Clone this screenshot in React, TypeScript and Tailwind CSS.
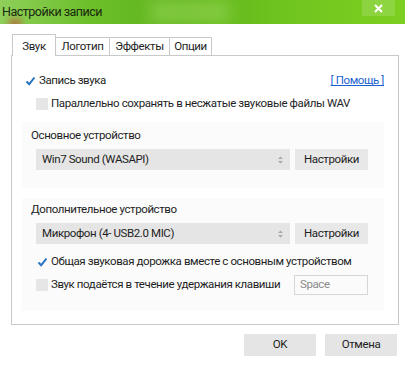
import React from "react";

const Check = () => (
  <svg width="11" height="10" viewBox="0 0 11 10" className="shrink-0">
    <path d="M1.5 5.5 L4.2 8.2 L9.5 1.5" fill="none" stroke="#2a73c2" strokeWidth="2" />
  </svg>
);

const Box = () => <span className="block w-[12px] h-[12px] bg-[#e6e6e6] shrink-0" />;

const Select = ({ value }: { value: string }) => (
  <div className="flex items-center gap-[5px]">
    <div className="w-[254px] h-[21px] bg-[#e5e5e5] flex items-center justify-between pl-[6px] pr-[6px]">
      <span>{value}</span>
      <svg width="7" height="10" viewBox="0 0 7 10">
        <path d="M1 4 L3.5 1.5 L6 4 Z M1 6 L3.5 8.5 L6 6 Z" fill="#a8a8a8" />
      </svg>
    </div>
    <div className="w-[73px] h-[21px] bg-[#e8e8e8] flex items-center justify-center">Настройки</div>
  </div>
);

export default function App() {
  const tabs = [
    { t: "Логотип", w: "w-[54px]" },
    { t: "Эффекты", w: "w-[60px]" },
    { t: "Опции", w: "w-[42px]" },
  ];
  return (
    <div
      className="w-[405px] h-[367px] bg-white text-[11.5px] tracking-[-0.4px] text-[#1e1e1e] relative overflow-hidden whitespace-nowrap"
      style={{ fontFamily: 'Roboto, "Liberation Sans", sans-serif' }}
    >
      {/* title bar */}
      <div className="h-[24px] relative bg-[linear-gradient(90deg,#8fcf5a_0%,#6cbf2a_22%,#5db31a_45%,#70c41f_70%,#7dd020_100%)] overflow-hidden">
        <div className="absolute left-[150px] top-0 w-[80px] h-[24px] bg-[#9ad85a] opacity-60 blur-[8px]" />
        <div className="absolute left-[8px] top-[19px] w-[14px] h-[8px] bg-[#c0503a] opacity-70 blur-[3px] rounded-full" />
        <span className="absolute left-[2px] top-[4px] text-[12.5px] tracking-[-0.5px] leading-[16px] text-[#1a2a10]">Настройки записи</span>
        <div className="absolute right-[10px] top-0 w-[33px] h-[16px] bg-white/15 flex items-center justify-center">
          <svg width="9" height="9" viewBox="0 0 9 9">
            <path d="M1 1 L8 8 M8 1 L1 8" stroke="white" strokeWidth="2" />
          </svg>
        </div>
      </div>

      <div className="px-[11px] pt-[11px]">
        {/* tabs */}
        <div className="flex items-end h-[20px] pl-[1px]">
          <div className="w-[44px] h-[22px] border border-b-0 border-[#c9c9c9] bg-white flex items-start justify-center pt-[3px] relative z-10 -mb-[1px]">
            Звук
          </div>
          {tabs.map((t) => (
            <div key={t.t} className={`${t.w} h-[18px] border border-l-0 border-b-0 border-[#c9c9c9] bg-white flex items-center justify-center`}>
              {t.t}
            </div>
          ))}
        </div>

        {/* panel */}
        <div className="w-[388px] h-[270px] border border-[#c9c9c9] px-[10px] pt-[17px]">
          <div className="flex items-center justify-between h-[16px]">
            <div className="flex items-center gap-[3px] pl-[3px]">
              <Check />
              <span>Запись звука</span>
            </div>
            <span className="text-[#1a5fd0] underline mr-[4px]">[ Помощь ]</span>
          </div>
          <div className="flex items-center gap-[3px] h-[16px] mt-[7px] pl-[14px]">
            <Box />
            <span>Параллельно сохранять в несжатые звуковые файлы WAV</span>
          </div>

          <div className="mt-[10px] bg-[#fbfbfb] h-[66px] pl-[9px] pt-[5px] mr-[4px]">
            <div className="h-[16px] leading-[16px]">Основное устройство</div>
            <div className="mt-[6px] pl-[5px]">
              <Select value="Win7 Sound (WASAPI)" />
            </div>
          </div>

          <div className="mt-[10px] bg-[#fbfbfb] h-[113px] pl-[9px] pt-[3px] mr-[4px]">
            <div className="h-[16px] leading-[16px]">Дополнительное устройство</div>
            <div className="mt-[6px] pl-[5px]">
              <Select value="Микрофон (4- USB2.0 MIC)" />
            </div>
            <div className="flex items-center gap-[3px] h-[16px] mt-[10px] pl-[6px]">
              <Check />
              <span>Общая звуковая дорожка вместе с основным устройством</span>
            </div>
            <div className="flex items-center h-[20px] mt-[5px] pl-[5px]">
              <Box />
              <span className="ml-[3px] w-[243px]">Звук подаётся в течение удержания клавиши</span>
              <div className="w-[74px] h-[20px] border border-[#d6d6d6] text-[#8a8a8a] flex items-center pl-[5px]">Space</div>
            </div>
          </div>
        </div>

        {/* bottom buttons */}
        <div className="flex justify-end gap-[9px] mt-[9px] mr-[-3px]">
          <div className="w-[72px] h-[22px] bg-[#e5e5e5] flex items-center justify-center">OK</div>
          <div className="w-[72px] h-[22px] bg-[#e5e5e5] flex items-center justify-center">Отмена</div>
        </div>
      </div>
    </div>
  );
}
